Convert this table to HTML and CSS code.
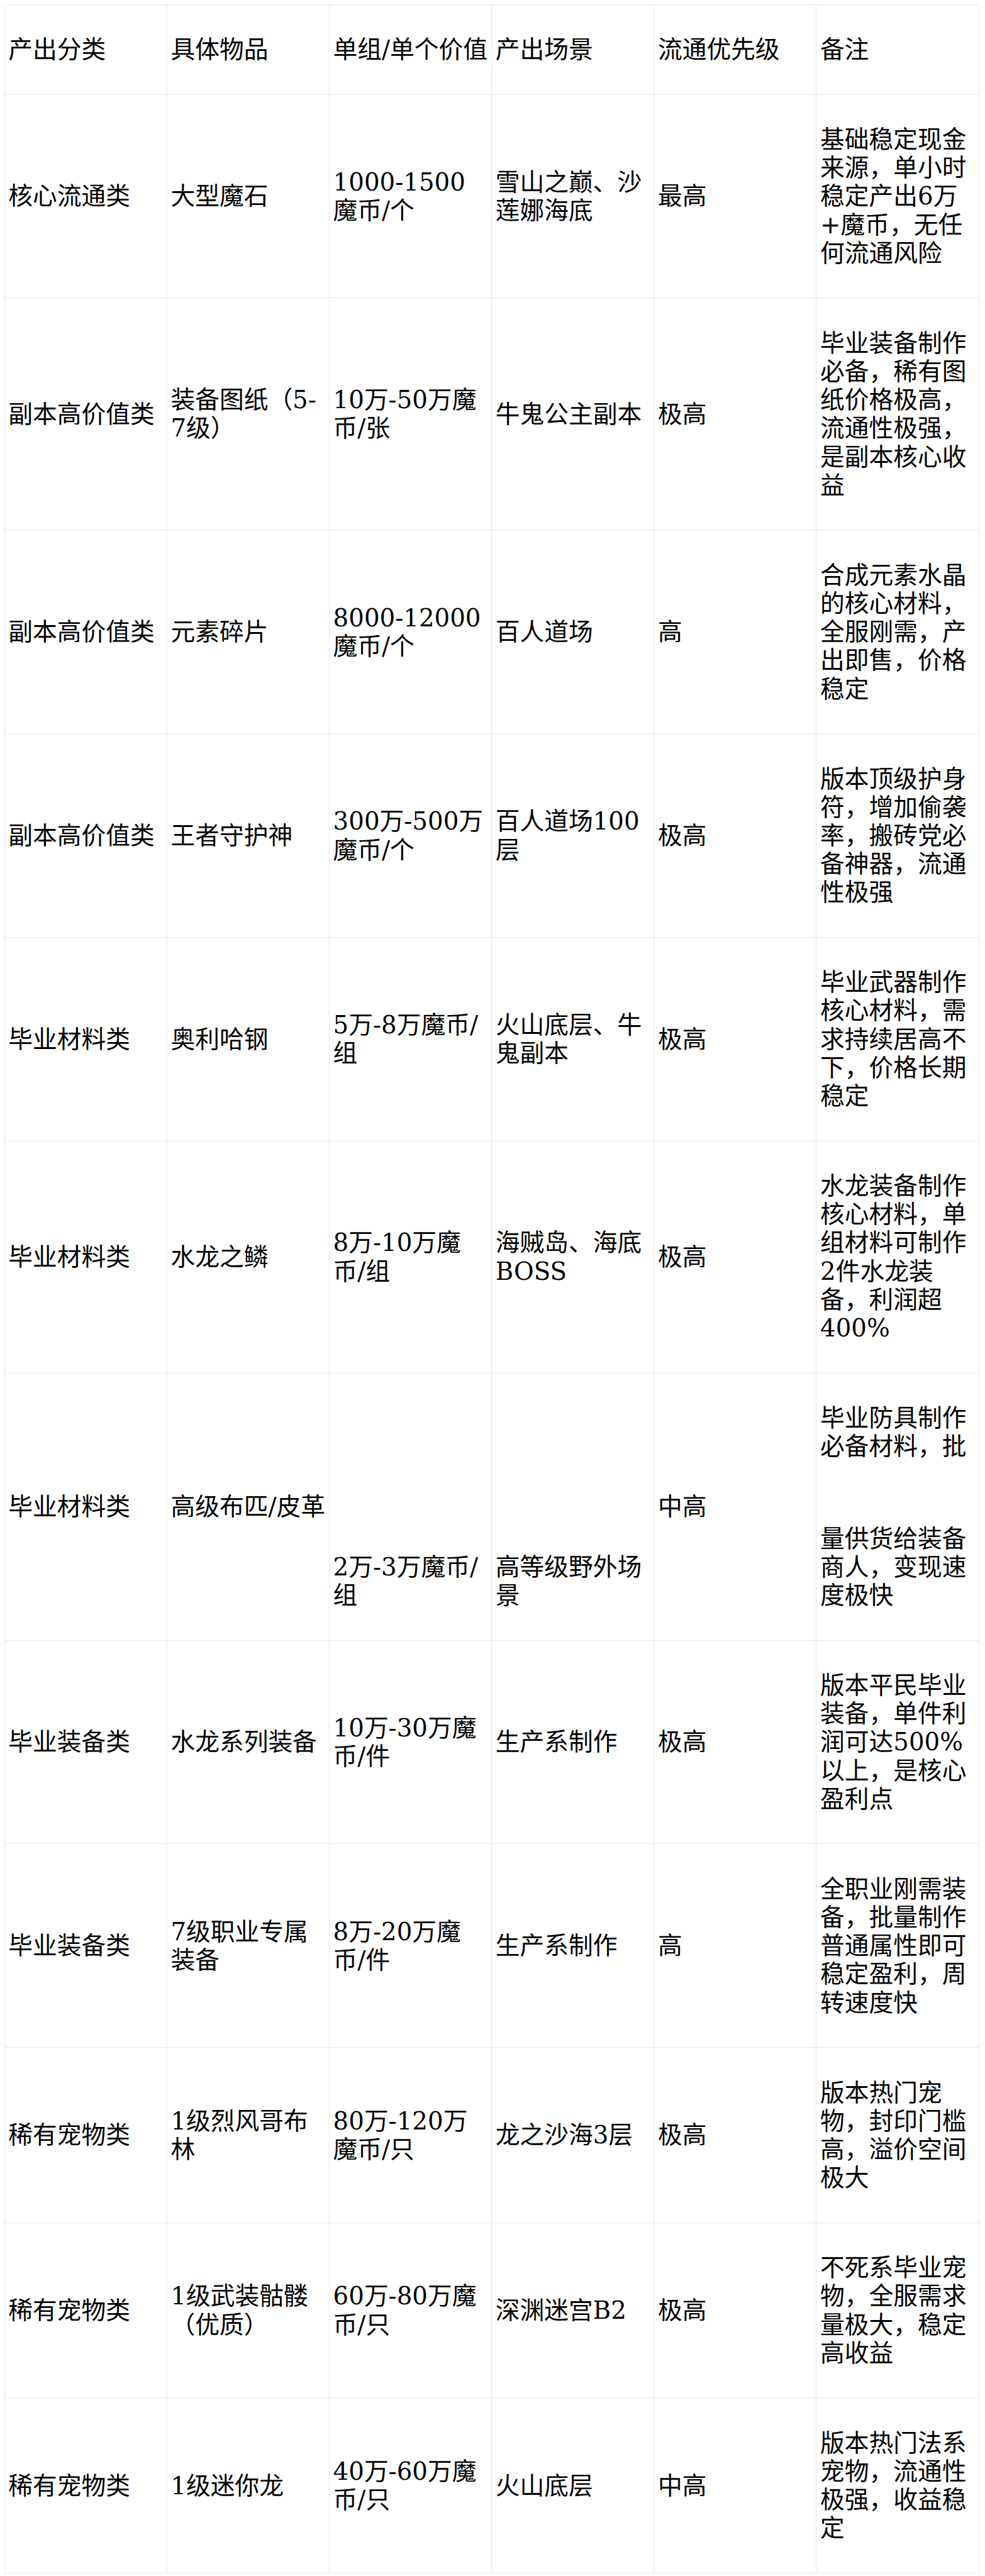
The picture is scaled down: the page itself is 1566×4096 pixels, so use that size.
FILE: index.html
```html
<!DOCTYPE html>
<html lang="zh-CN">
<head>
<meta charset="utf-8">
<title>产出价值表</title>
<link rel="stylesheet" href="styles.css">
</head>
<body>
<table class="loot">
  <thead>
    <tr>
      <th>产出分类</th>
      <th>具体物品</th>
      <th>单组/单个价值</th>
      <th>产出场景</th>
      <th>流通优先级</th>
      <th class="note">备注</th>
    </tr>
  </thead>
  <tbody>
    <tr>
      <td>核心流通类</td>
      <td>大型魔石</td>
      <td>1000-1500魔币/个</td>
      <td>雪山之巅、沙莲娜海底</td>
      <td>最高</td>
      <td class="note">基础稳定现金来源，单小时稳定产出6万+魔币，无任何流通风险</td>
    </tr>
    <tr>
      <td>副本高价值类</td>
      <td>装备图纸（5-7级）</td>
      <td>10万-50万魔币/张</td>
      <td>牛鬼公主副本</td>
      <td>极高</td>
      <td class="note">毕业装备制作必备，稀有图纸价格极高，流通性极强，是副本核心收益</td>
    </tr>
    <tr>
      <td>副本高价值类</td>
      <td>元素碎片</td>
      <td>8000-12000魔币/个</td>
      <td>百人道场</td>
      <td>高</td>
      <td class="note">合成元素水晶的核心材料，全服刚需，产出即售，价格稳定</td>
    </tr>
    <tr>
      <td>副本高价值类</td>
      <td>王者守护神</td>
      <td>300万-500万魔币/个</td>
      <td>百人道场100层</td>
      <td>极高</td>
      <td class="note">版本顶级护身符，增加偷袭率，搬砖党必备神器，流通性极强</td>
    </tr>
    <tr>
      <td>毕业材料类</td>
      <td>奥利哈钢</td>
      <td>5万-8万魔币/组</td>
      <td>火山底层、牛鬼副本</td>
      <td>极高</td>
      <td class="note">毕业武器制作核心材料，需求持续居高不下，价格长期稳定</td>
    </tr>
    <tr>
      <td>毕业材料类</td>
      <td>水龙之鳞</td>
      <td>8万-10万魔币/组</td>
      <td>海贼岛、海底BOSS</td>
      <td>极高</td>
      <td class="note">水龙装备制作核心材料，单组材料可制作2件水龙装备，利润超400%</td>
    </tr>
    <tr>
      <td>毕业材料类</td>
      <td class="one-line">高级布匹/皮革</td>
      <td class="cell-bottom">2万-3万魔币/组</td>
      <td class="cell-bottom">高等级野外场景</td>
      <td>中高</td>
      <td class="note"><span class="note-part">毕业防具制作必备材料，批</span><span class="note-part note-part-gap">量供货给装备商人，变现速度极快</span></td>
    </tr>
    <tr>
      <td>毕业装备类</td>
      <td>水龙系列装备</td>
      <td>10万-30万魔币/件</td>
      <td>生产系制作</td>
      <td>极高</td>
      <td class="note">版本平民毕业装备，单件利润可达500%以上，是核心盈利点</td>
    </tr>
    <tr>
      <td>毕业装备类</td>
      <td>7级职业专属装备</td>
      <td>8万-20万魔币/件</td>
      <td>生产系制作</td>
      <td>高</td>
      <td class="note">全职业刚需装备，批量制作普通属性即可稳定盈利，周转速度快</td>
    </tr>
    <tr>
      <td>稀有宠物类</td>
      <td>1级烈风哥布林</td>
      <td>80万-120万魔币/只</td>
      <td>龙之沙海3层</td>
      <td>极高</td>
      <td class="note">版本热门宠物，封印门槛高，溢价空间极大</td>
    </tr>
    <tr>
      <td>稀有宠物类</td>
      <td>1级武装骷髅（优质）</td>
      <td>60万-80万魔币/只</td>
      <td>深渊迷宫B2</td>
      <td>极高</td>
      <td class="note">不死系毕业宠物，全服需求量极大，稳定高收益</td>
    </tr>
    <tr>
      <td>稀有宠物类</td>
      <td>1级迷你龙</td>
      <td>40万-60万魔币/只</td>
      <td>火山底层</td>
      <td>中高</td>
      <td class="note">版本热门法系宠物，流通性极强，收益稳定</td>
    </tr>
  </tbody>
</table>
</body>
</html>
```

FILE: styles.css
```css
html,
body {
  margin: 0;
  background: #ffffff;
}

body {
  padding: 6.7px;
}

.loot {
  width: 1550px;
  border-collapse: collapse;
  table-layout: fixed;
  font-family: "DejaVu Serif", "Noto Sans CJK SC", serif;
  font-size: 38.74px;
  line-height: 45.19px;
  color: #000000;
}

.loot th,
.loot td {
  border: 1px solid #e5e7eb;
  padding: 48.42px 4px 48.42px 5.6px;
  text-align: left;
  vertical-align: middle;
  font-weight: normal;
  word-wrap: break-word;
}

.loot td.cell-bottom {
  vertical-align: bottom;
}

.loot td.one-line {
  white-space: nowrap;
}

.loot th.note,
.loot td.note {
  padding-right: 17.5px;
}

.note-part {
  display: block;
}

.note-part-gap {
  margin-top: 101.4px;
}
```
